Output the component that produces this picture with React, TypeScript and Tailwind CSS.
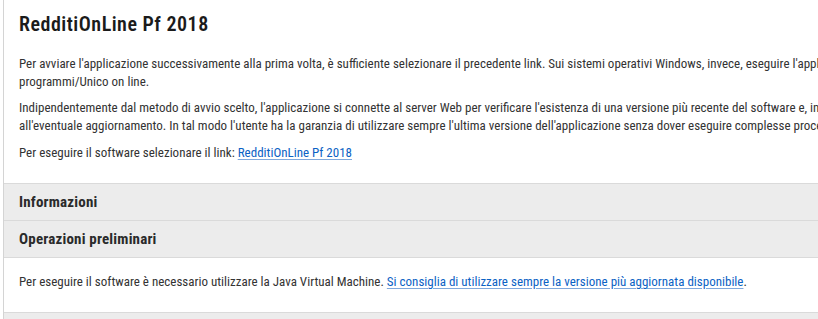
import React from 'react';

const font = { fontFamily: '"Roboto Condensed", "Liberation Sans", sans-serif' };

const Section: React.FC<{ title: string }> = ({ title }) => (
  <div className="border-t border-[#dadada] bg-[#ececec] h-[37px] pl-[15px] flex items-center">
    <h3 className="text-[15px] font-bold text-[#2a2a2a] tracking-[0.2px]">{title}</h3>
  </div>
);

export default function App() {
  return (
    <div className="w-full h-[319px] overflow-hidden bg-white" style={font}>
      <div className="ml-[3px] w-[1100px] border-l border-[#d4d4d4] min-h-[319px]">
        {/* Intro */}
        <div className="px-[15px] pt-[10px] pb-[21px] text-[13px] leading-[18px] text-[#333]">
          <h2 className="text-[20px] font-semibold text-[#1b1b1b] tracking-[0.5px] leading-[28px] mb-[17px]">
            RedditiOnLine Pf 2018
          </h2>
          <p className="mb-[8px]">
            Per avviare l'applicazione successivamente alla prima volta, è sufficiente selezionare il precedente link. Sui sistemi operativi Windows, invece, eseguire l'applicazione dal menu Start/Tutti i
            <br />
            programmi/Unico on line.
          </p>
          <p className="mb-[9px]">
            Indipendentemente dal metodo di avvio scelto, l'applicazione si connette al server Web per verificare l'esistenza di una versione più recente del software e, in caso affermativo, procede
            <br />
            all'eventuale aggiornamento. In tal modo l'utente ha la garanzia di utilizzare sempre l'ultima versione dell'applicazione senza dover eseguire complesse procedure di installazione.
          </p>
          <p>
            Per eseguire il software selezionare il link:{' '}
            <a href="#" className="text-[#0b62c4] underline decoration-[#7fa8dc] underline-offset-2">
              RedditiOnLine Pf 2018
            </a>
          </p>
        </div>

        <Section title="Informazioni" />
        <Section title="Operazioni preliminari" />

        <div className="border-t border-[#dadada] px-[15px] pt-[15px] pb-[20px] h-[55px] text-[13px] leading-[18px] text-[#333]">
          Per eseguire il software è necessario utilizzare la Java Virtual Machine.{' '}
          <a href="#" className="text-[#0b62c4] underline decoration-[#7fa8dc] underline-offset-2">
            Si consiglia di utilizzare sempre la versione più aggiornata disponibile
          </a>
          .
        </div>

        <div className="border-t border-[#dadada] bg-[#ececec] h-[37px]" />
      </div>
    </div>
  );
}
